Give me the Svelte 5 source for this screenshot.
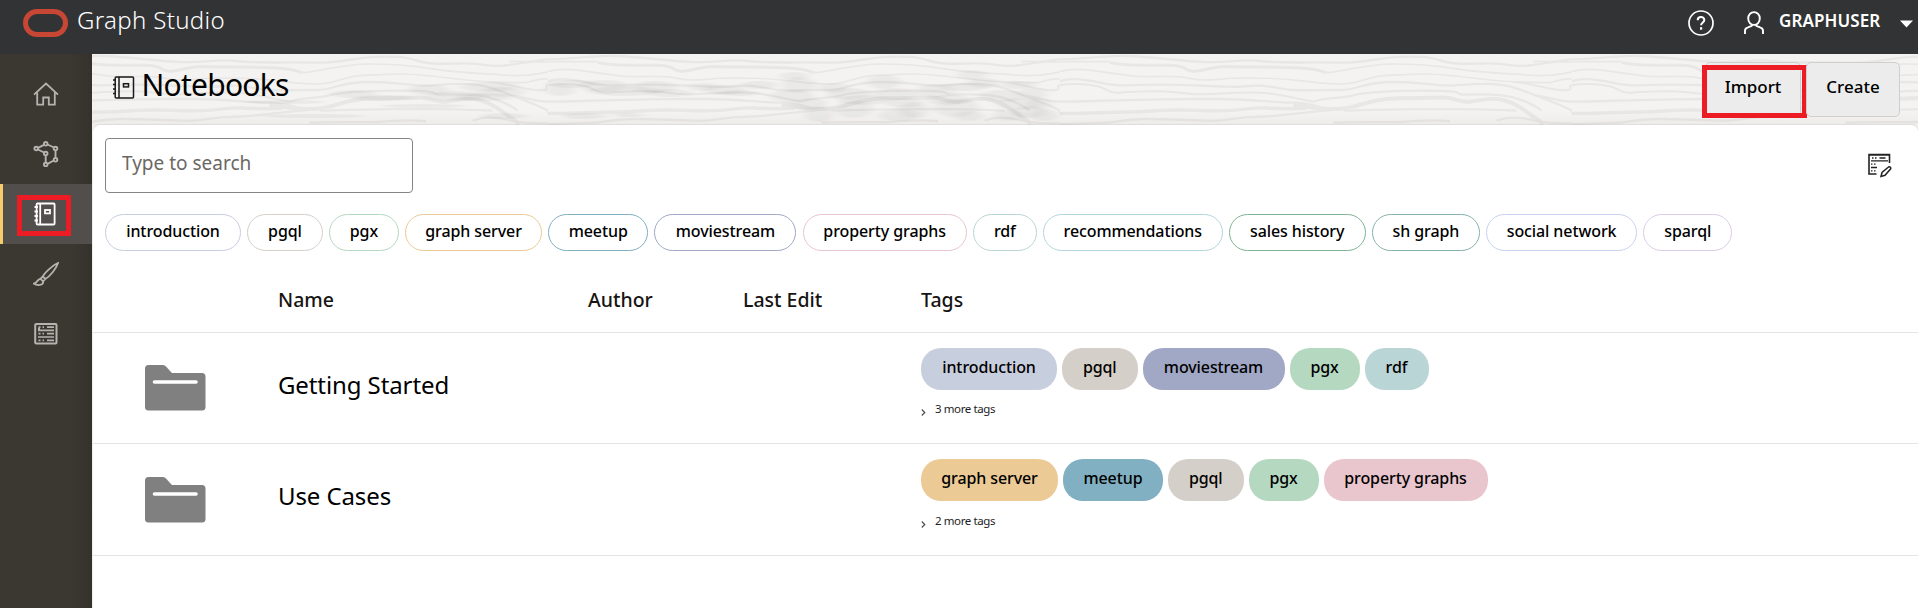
<script>
  const filters = [
    { label: 'introduction', color: '#c7cede', width: 136 },
    { label: 'pgql', color: '#d5cfca', width: 75.5 },
    { label: 'pgx', color: '#b5d8c0', width: 70 },
    { label: 'graph server', color: '#ebca96', width: 137 },
    { label: 'meetup', color: '#80b0c2', width: 100 },
    { label: 'moviestream', color: '#a0a8c5', width: 142 },
    { label: 'property graphs', color: '#e9c5ce', width: 164 },
    { label: 'rdf', color: '#bad5d5', width: 64 },
    { label: 'recommendations', color: '#b4d6de', width: 179.5 },
    { label: 'sales history', color: '#7fb394', width: 137 },
    { label: 'sh graph', color: '#86b3ac', width: 108 },
    { label: 'social network', color: '#c8d2f0', width: 151 },
    { label: 'sparql', color: '#dccbe6', width: 89 }
  ];
  const byName = Object.fromEntries(filters.map((t) => [t.label, t]));
  const rows = [
    { name: 'Getting Started', tags: ['introduction', 'pgql', 'moviestream', 'pgx', 'rdf'], more: '3 more tags' },
    { name: 'Use Cases', tags: ['graph server', 'meetup', 'pgql', 'pgx', 'property graphs'], more: '2 more tags' }
  ];
  // Knots of the wood background: centre x, centre y, rx, ry
  const knots = [
    [270, 40, 22, 4], [300, 44, 30, 3], [345, 36, 20, 5], [372, 42, 30, 5], [340, 52, 40, 2], [200, 48, 40, 2], [230, 62, 50, 2],
    [405, 33, 28, 5], [418, 38, 22, 5], [400, 43, 28, 4], [476, 36, 14, 6], [488, 30, 26, 4], [520, 32, 24, 6], [540, 37, 36, 5], [570, 33, 22, 6], [585, 39, 22, 4],
    [420, 62, 22, 3], [500, 62, 20, 3], [545, 61, 14, 2], [620, 33, 14, 4], [640, 36, 20, 5], [655, 39, 20, 3],
    [710, 22, 14, 4], [715, 31, 16, 8], [708, 42, 22, 6], [725, 50, 18, 6], [735, 60, 14, 8], [675, 31, 18, 4],
    [750, 34, 14, 5], [765, 40, 22, 6], [780, 46, 26, 5], [770, 55, 18, 9], [800, 28, 16, 7], [812, 40, 22, 6], [820, 49, 18, 5], [815, 61, 20, 6], [830, 56, 14, 8],
    [852, 37, 18, 7], [865, 46, 22, 5], [872, 54, 22, 9], [885, 62, 14, 5], [888, 21, 14, 5], [900, 29, 16, 5], [880, 33, 24, 4],
    [918, 42, 22, 6], [935, 50, 22, 6], [945, 58, 18, 6], [925, 61, 14, 6], [935, 31, 16, 4], [948, 40, 14, 6], [955, 50, 12, 6], [960, 61, 14, 6]
  ];
</script>

<div class="app">
  <header class="topbar">
    <svg class="logo" width="46" height="28" viewBox="0 0 46 28"><rect x="2.5" y="2.5" width="40" height="23" rx="11.5" fill="none" stroke="#c74634" stroke-width="5" /></svg>
    <span class="product">Graph Studio</span>
    <div class="account">
      <svg width="26" height="26" viewBox="0 0 26 26" fill="none" stroke="#fff" stroke-width="1.7"><circle cx="13" cy="13" r="12" /><path d="M9.7 10.2c0-4.2 6.6-4.2 6.6-.2 0 2.5-3.2 2.4-3.2 5.3" stroke-width="2" /><path d="M13.1 17.2v2.5" stroke-width="2.2" /></svg>
      <svg class="person" width="22" height="24" viewBox="0 0 22 24" fill="none" stroke="#fff" stroke-width="1.9"><ellipse cx="11" cy="7.5" rx="5.8" ry="6.4" /><path d="M2 23v-3.2c0-2 1-3 3-3.500l3.500-1.300 1.300-1.500M20 23v-3.200c0-2-1-3-3-3.500l-3.500-1.300-1.300-1.500" /></svg>
      <span class="user">GRAPHUSER</span>
      <svg class="caret" width="13" height="8" viewBox="0 0 13 8"><path d="M0 .5h13L6.500 7.500z" fill="#fff" /></svg>
    </div>
  </header>

  <div class="body">
    <nav class="side">
      <div class="item"><svg width="26" height="24" viewBox="0 0 26 24" fill="none" stroke="#b5b3b0" stroke-width="1.800"><path d="M1 12.700L13 1.500l12 11.200M4.200 10.500v12.200h6v-7.200h5.600v7.200h6V10.500" /></svg></div>
      <div class="item"><svg class="graph" width="26" height="26" viewBox="0 0 26 26" fill="none" stroke="#b5b3b0" stroke-width="1.900"><path d="M5 6.800l6-3M14.500 3.500l6.500 3M5 8.500l6 3M12.700 14.500v7M14.500 22.800l6.300-3.300M22.500 9.500v7.500" /><circle cx="3.200" cy="7.500" r="1.800" /><circle cx="12.700" cy="2.800" r="1.800" /><circle cx="22.500" cy="7.500" r="1.800" /><circle cx="12.700" cy="12.500" r="1.800" /><circle cx="22.500" cy="18.800" r="1.800" /><circle cx="12.700" cy="23.500" r="1.800" /></svg></div>
      <div class="item active"><svg width="22" height="24" viewBox="0 0 22 24" fill="none" stroke="#fff" stroke-width="1.800"><rect x="2.600" y="1.500" width="18" height="21" rx="1" /><path d="M6.200 1.500v21M.5 5h3.500M.5 9.500h3.500M.5 14h3.500M.5 18.500h3.500" /><rect x="11" y="8" width="5" height="3.400" /></svg><span class="marker"></span></div>
      <div class="item"><svg width="26" height="25" viewBox="0 0 26 25" fill="none" stroke="#b5b3b0" stroke-width="1.800"><path d="M25 1C20 3 11.500 11 9.800 14.500l2.500 2.500C17 14.500 23 7 25 1zM9.800 14.500l-2.300 2.300 2.600 2.600 2.200-2.400M7.500 16.800c-3 0-3 4.200-6.800 4.800 3.500 2.400 10 2 9.400-2.200" /></svg></div>
      <div class="item"><svg width="24" height="22" viewBox="0 0 24 22" fill="none" stroke="#b5b3b0" stroke-width="1.700"><rect x="1.200" y="1" width="21.300" height="19.500" rx="1" stroke-width="2" /><path d="M4 7.300h16M4 14h16M4 5.700h2M13 4.200h7M13 10.700h7M13 17.300h7M4.500 4.200h2M8.500 4.200h1.500M4.500 10.700h2M8.500 10.700h1.500M4.500 17.300h2M8.500 17.300h1.500" /></svg></div>
    </nav>

    <main>
      <section class="banner">
        <svg class="wood" width="1826" height="71">
          <defs>
            <pattern id="grain" width="512" height="71" patternUnits="userSpaceOnUse" patternTransform="translate(-56 0)">
              <g transform="translate(0 -4) scale(.3333)" fill="none" stroke="#e8e7e5" stroke-width="7" stroke-linejoin="round">
                <path d="M0 28C70 28 130 16 200 18S350 32 430 36S540 26 600 33S760 36 840 38S960 20 1040 20S1100 22 1160 36S1270 32 1340 44S1450 36 1536 28" />
                <path d="M1420 34L1536 36M0 35L150 35" stroke-width="5" />
                <path d="M150 38C200 50 270 44 330 46S370 64 400 64S450 50 490 50S650 50 720 54S780 66 800 68" stroke-width="9" />
                <path d="M800 68C840 66 920 42 1000 42S1150 50 1200 58S1330 70 1400 75S1500 73 1536 66" stroke-width="5" />
                <path d="M0 64C30 56 60 56 100 62S180 74 220 78S300 78 350 80S390 90 430 90S500 84 550 84S650 84 700 90S780 100 840 102S920 78 980 76S1060 72 1100 72S1240 84 1290 90S1460 98 1470 98S1500 84 1536 87" stroke-width="5" />
                <path d="M0 94C20 86 60 84 120 98S200 104 300 104S420 108 500 110S560 105 600 107S660 118 700 120S780 120 840 120S900 96 1000 96S1120 110 1180 106S1310 96 1360 112S1450 145 1500 165S1536 186 1536 190" />
                <path d="M1360 95C1410 98 1470 121 1510 121S1520 108 1536 105M0 105C40 100 80 102 110 108S140 128 170 128S230 122 300 124S380 134 420 133S540 126 600 128S700 145 760 155" stroke-width="6" />
                <path d="M760 155C800 142 840 146 880 136S970 122 1100 122S1180 134 1210 134S1310 128 1360 142S1430 170 1445 182" />
                <path d="M1430 138C1480 140 1490 155 1536 155M0 155C100 154 200 149 300 148S400 147 480 147S650 158 700 158S780 170 800 178" />
                <path d="M700 165C760 174 830 184 880 170S960 145 1020 145S1140 142 1160 143S1200 158 1230 155S1290 140 1330 150S1400 185 1450 222" stroke-width="12" />
                <path d="M0 190C80 192 130 186 200 186S280 180 350 180S450 184 500 182S580 172 620 174S680 178 740 175" stroke-width="10" />
                <path d="M0 222C60 220 120 219 150 217S190 208 250 207S400 212 450 212S520 202 600 200S700 188 840 178M850 182C920 182 960 178 1020 178S1250 174 1370 182" />
                <path d="M820 218C900 214 980 218 1020 216S1120 206 1170 214M1310 212C1340 200 1370 200 1410 208S1440 220 1536 220" />
              </g>
            </pattern>
            <filter id="soft" x="-10%" y="-50%" width="120%" height="200%"><feGaussianBlur stdDeviation="5 0.7" /></filter>
            <linearGradient id="shade" x1="0" y1="0" x2="0" y2="1"><stop offset=".8" stop-color="#000" stop-opacity="0" /><stop offset="1" stop-color="#000" stop-opacity=".03" /></linearGradient>
          </defs>
          <rect width="1826" height="71" fill="url(#grain)" />
          <g filter="url(#soft)" fill="#000" fill-opacity=".042">
            {#each knots as [x, y, rx, ry]}<ellipse cx={x - 8} cy={y} {rx} {ry} />{/each}
          </g>
          <rect width="1826" height="71" fill="url(#shade)" />
        </svg>
        <h1>
          <svg width="22" height="23" viewBox="0 0 22 23" fill="none" stroke="#1a1a1a" stroke-width="1.500"><rect x="2.200" y="1" width="18.300" height="21" rx="1" /><path d="M6 1v21M0 4h3M0 8.500h3M0 13h3M0 17.500h3" /><rect x="10.500" y="7.700" width="5" height="3.200" /></svg>
          <span>Notebooks</span>
        </h1>
        <div class="actions">
          <button class="import">Import<span class="marker"></span></button>
          <button class="create">Create</button>
        </div>
      </section>

      <section class="card">
        <div class="tools">
          <input placeholder="Type to search" />
          <svg width="25" height="25" viewBox="0 0 25 25" fill="none" stroke="#222" stroke-width="1.600"><path d="M9.500 21H2V1.500h20.500V10M2 2h20.500" /><path d="M4 7.800h17M12.500 5h6M5 5h1.500M8 5h1.500M4 11.200h1.500M7 11.200h1.500M4 14.500h6M4 17.800h1.500M7 17.800h1.500" stroke-width="1.300" /><path d="M14 23.500l1-4 6.500-5.500c1.500-.8 2.800.8 2 2L18 22.300z" stroke-width="1.500" /></svg>
        </div>
        <div class="filters">
          {#each filters as t}<span class="tag" style="width:{t.width}px;border-color:{t.color}">{t.label}</span>{/each}
        </div>
        <div class="grid head"><span></span><span>Name</span><span>Author</span><span>Last Edit</span><span>Tags</span></div>
        {#each rows as r}
          <div class="grid row">
            <svg class="folder" width="61" height="46" viewBox="0 0 61 46"><path d="M3 0h14.500c2 0 3 .8 4 2l3.800 4.200c.8 1 1.500 1.800 3 1.800H57a3.500 3.500 0 0 1 3.500 3.500V42a3.500 3.500 0 0 1-3.500 3.500H3.500A3.500 3.500 0 0 1 0 42V3.500A3.500 3.500 0 0 1 3.500 0z" fill="#808080" /><path d="M9.500 17h41.500" stroke="#fff" stroke-width="3.600" stroke-linecap="round" /></svg>
            <span class="name">{r.name}</span>
            <span></span><span></span>
            <div class="taglist">
              <div class="chips">
                {#each r.tags as label}<span class="chip" style="width:{byName[label].width}px;background:{byName[label].color}">{label}</span>{/each}
              </div>
              <div class="more"><svg width="5" height="7" viewBox="0 0 5 7" fill="none" stroke="#444" stroke-width="1.100"><path d="M.8.500L3.800 3.500.8 6.500" /></svg><span>{r.more}</span></div>
            </div>
          </div>
        {/each}
      </section>
    </main>
  </div>
</div>

<style>
  :global(body) { background: #fff; overflow: hidden; }
  .app { height: 608px; font-family: "Noto Sans", "Open Sans", sans-serif; color: #000; display: flex; flex-direction: column; }
  .app * { box-sizing: border-box; }
  .topbar { height: 54px; flex: none; background: #323335; color: #fff; display: flex; padding-left: 23px; align-items: flex-start; }
  .logo { margin-top: 9px; }
  .product { font-size: 24px; line-height: 32px; margin: 4px 0 0 8px; font-weight: 300; letter-spacing: 0.35px; }
  .account { margin-left: auto; display: flex; align-items: flex-start; padding: 10px 5px 0 0; }
  .person { margin: 1px 0 0 29px; }
  .user { font-weight: 600; font-size: 17px; line-height: 22px; margin-left: 14px; width: 104px; letter-spacing: 0.1px; white-space: nowrap; }
  .caret { margin: 10px 0 0 17px; }
  .body { flex: 1; display: flex; min-height: 0; }
  .side { width: 92px; flex: none; background: linear-gradient(90deg, #3b3731 75%, #35312c); padding-top: 10px; }
  .item { height: 60px; display: flex; align-items: center; justify-content: center; border-left: 3px solid transparent; padding-right: 4px; position: relative; }
  .item.active { background: #524e4b; border-left-color: #f6cd6b; padding-right: 6px; }
  .marker { position: absolute; border: 5px solid #ed1c24; }
  .item .marker { left: 14px; top: 11px; width: 54px; height: 41px; }
  main { flex: 1; display: flex; flex-direction: column; background: #f0efee; border-left: 0; }
  .banner { height: 71px; flex: none; position: relative; background: #f4f3f1; display: flex; justify-content: space-between; }
  .wood { position: absolute; inset: 0; }
  h1 { margin: 0; position: relative; display: flex; padding-left: 21px; font-weight: 400; font-size: 30px; line-height: 40px; }
  h1 svg { margin-top: 22px; }
  h1 span { margin: 11px 0 0 6.5px; letter-spacing: -0.75px; }
  .actions { position: relative; display: flex; gap: 5px; padding: 8px 18px 0 0; }
  button { height: 55px; border: 1px solid #cfcfcf; border-radius: 5px; background: #ececec; font: 500 17px/22px "Noto Sans", sans-serif; padding: 0 0 5px; color: #000; position: relative; }
  .import { width: 96px; }
  .create { width: 94px; }
  .import .marker { left: -4px; top: 2px; width: 105px; height: 53px; }
  .card { flex: 1; background: #fff; border-radius: 7px 7px 0 0; margin-left: 1px; box-shadow: 0 -1px 1px #0001; position: relative; }
  .tools { display: flex; justify-content: space-between; padding: 13px 26px 0 12px; }
  .tools svg { margin-top: 15px; }
  input { width: 308px; height: 55px; border: 1px solid #858585; border-radius: 4px; font: 400 19px "Noto Sans", sans-serif; padding: 0 16px 6px; }
  input::placeholder { color: #6b6864; opacity: 1; }
  .filters { display: flex; gap: 6.200px; padding: 21px 12px 0; }
  .tag, .chip { flex: none; text-align: center; font-weight: 500; font-size: 16px; letter-spacing: -0.1px; white-space: nowrap; }
  .tag { height: 37px; border: 1px solid; border-radius: 19px; line-height: 33px; }
  .grid { display: grid; grid-template-columns: 185px 310px 155px 178px 1fr; border-bottom: 1px solid #e4e4e4; }
  .head { height: 82px; padding-top: 35px; font-weight: 500; font-size: 19.5px; line-height: 28px; color: #161513; }
  .row { height: 111px; }
  .row + .row { height: 112px; }
  .folder { margin: 32px 0 0 51.5px; }
  .row + .row .folder { margin-top: 33px; }
  .row + .row .more { margin-top: 12px; }
  .name { font-size: 24px; line-height: 34px; margin-top: 35px; letter-spacing: -0.1px; }
  .chips { display: flex; gap: 5px; padding-top: 15px; }
  .chip { height: 42px; border-radius: 20px; line-height: 38px; }
  .more { display: flex; gap: 9px; font-size: 11.500px; line-height: 16px; margin-top: 11px; color: #222; align-items: center; letter-spacing: -0.4px; }
  .more svg { margin-top: 6px; }
</style>
